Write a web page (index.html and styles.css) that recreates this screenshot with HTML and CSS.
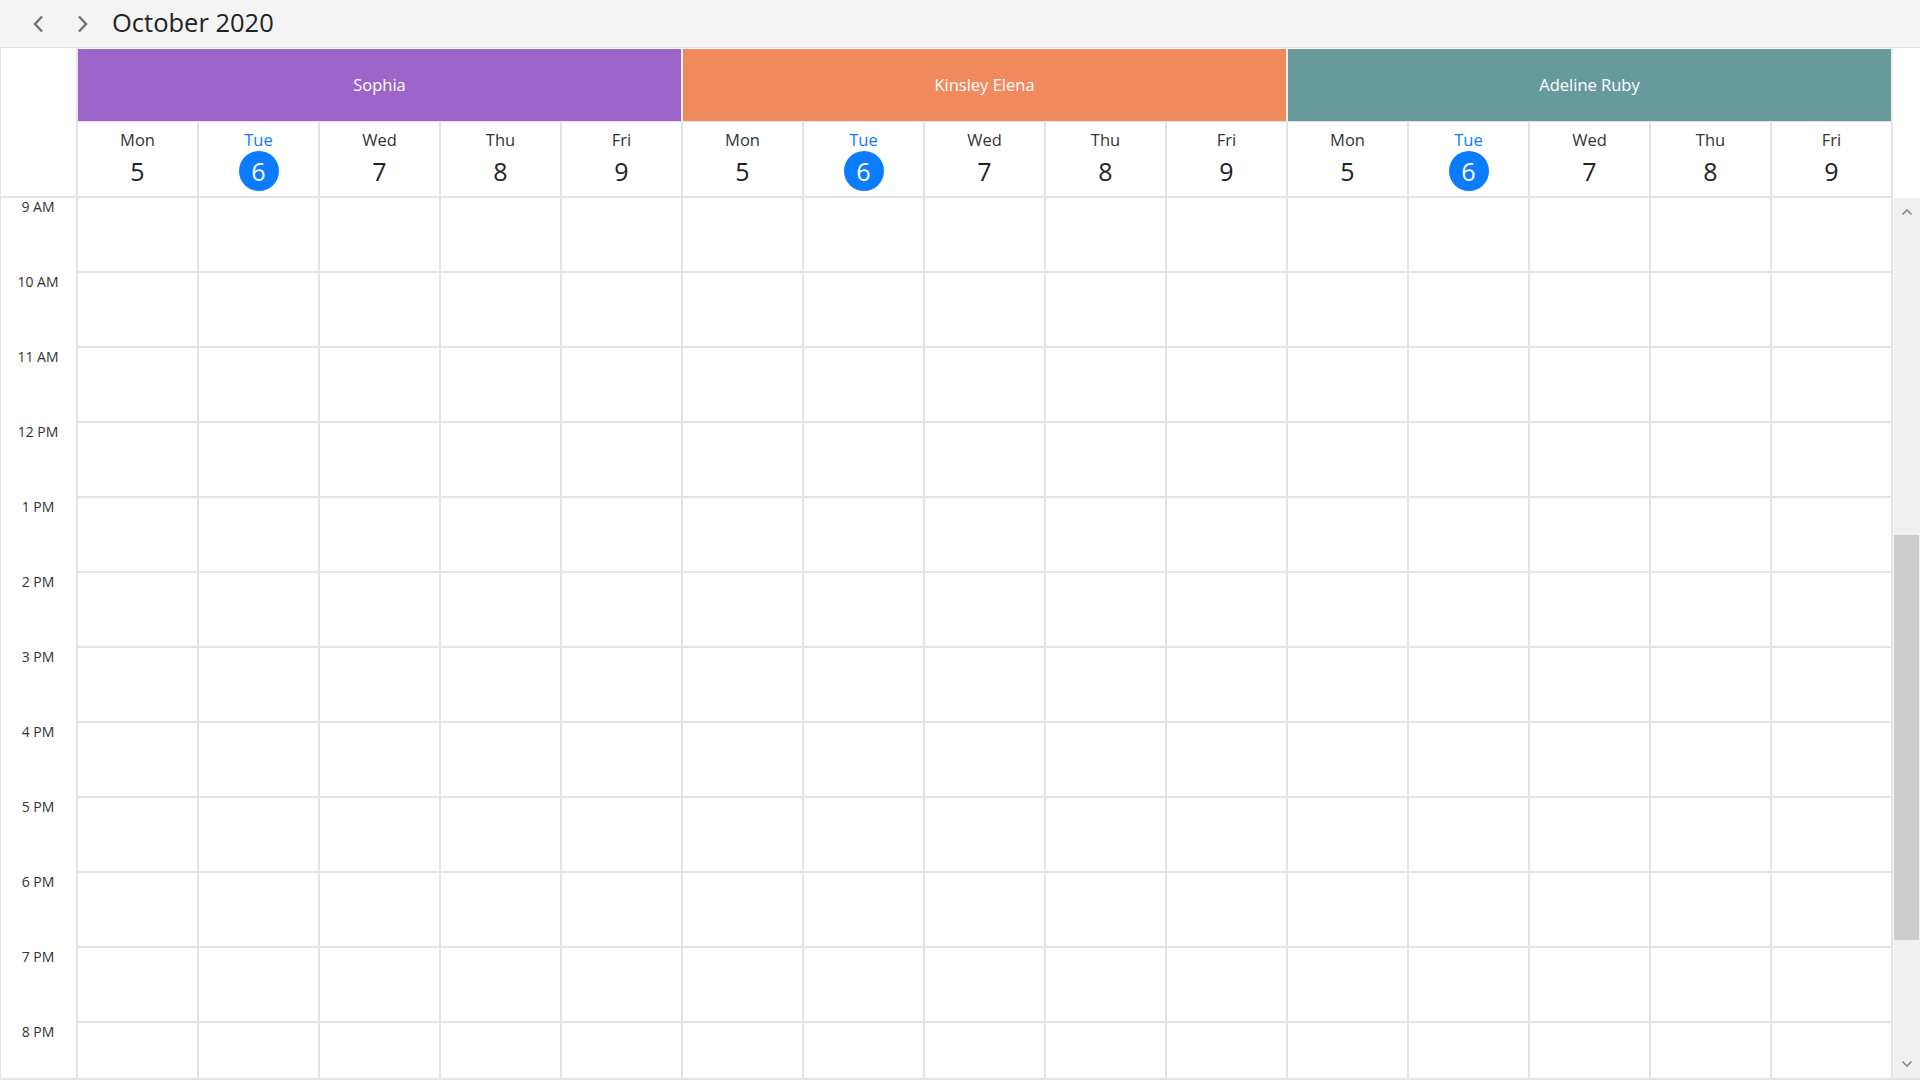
FILE: index.html
```html
<!DOCTYPE html>
<html lang="en">
<head>
<meta charset="utf-8">
<title>Scheduler - October 2020</title>
<link rel="stylesheet" href="styles.css">
</head>
<body>
<div class="toolbar">
  <button class="nav-btn" aria-label="Previous">
    <svg width="12" height="18" viewBox="0 0 12 18"><path d="M10 1.5 L3 9 L10 16.5" fill="none" stroke="#727272" stroke-width="2.4"/></svg>
  </button>
  <button class="nav-btn" aria-label="Next">
    <svg width="12" height="18" viewBox="0 0 12 18"><path d="M2 1.5 L9 9 L2 16.5" fill="none" stroke="#727272" stroke-width="2.4"/></svg>
  </button>
  <div class="title">October 2020</div>
</div>

<div class="scheduler">
  <div class="sched-head">
    <div class="corner"></div>
    <div class="groups">
      <div class="resource r-purple">Sophia</div>
      <div class="resource r-orange">Kinsley Elena</div>
      <div class="resource r-teal">Adeline Ruby</div>

      <div class="day"><span class="dname">Mon</span><span class="dnum">5</span></div>
      <div class="day today"><span class="dname">Tue</span><span class="dnum">6</span></div>
      <div class="day"><span class="dname">Wed</span><span class="dnum">7</span></div>
      <div class="day"><span class="dname">Thu</span><span class="dnum">8</span></div>
      <div class="day"><span class="dname">Fri</span><span class="dnum">9</span></div>

      <div class="day"><span class="dname">Mon</span><span class="dnum">5</span></div>
      <div class="day today"><span class="dname">Tue</span><span class="dnum">6</span></div>
      <div class="day"><span class="dname">Wed</span><span class="dnum">7</span></div>
      <div class="day"><span class="dname">Thu</span><span class="dnum">8</span></div>
      <div class="day"><span class="dname">Fri</span><span class="dnum">9</span></div>

      <div class="day"><span class="dname">Mon</span><span class="dnum">5</span></div>
      <div class="day today"><span class="dname">Tue</span><span class="dnum">6</span></div>
      <div class="day"><span class="dname">Wed</span><span class="dnum">7</span></div>
      <div class="day"><span class="dname">Thu</span><span class="dnum">8</span></div>
      <div class="day"><span class="dname">Fri</span><span class="dnum">9</span></div>
    </div>
    <div class="gutter"></div>
  </div>

  <div class="sched-body">
    <div class="times">
      <div class="time">9 AM</div>
      <div class="time">10 AM</div>
      <div class="time">11 AM</div>
      <div class="time">12 PM</div>
      <div class="time">1 PM</div>
      <div class="time">2 PM</div>
      <div class="time">3 PM</div>
      <div class="time">4 PM</div>
      <div class="time">5 PM</div>
      <div class="time">6 PM</div>
      <div class="time">7 PM</div>
      <div class="time">8 PM</div>
    </div>
    <div class="cells">
      <div class="row"><div class="c"></div><div class="c"></div><div class="c"></div><div class="c"></div><div class="c"></div><div class="c"></div><div class="c"></div><div class="c"></div><div class="c"></div><div class="c"></div><div class="c"></div><div class="c"></div><div class="c"></div><div class="c"></div><div class="c"></div></div>
      <div class="row"><div class="c"></div><div class="c"></div><div class="c"></div><div class="c"></div><div class="c"></div><div class="c"></div><div class="c"></div><div class="c"></div><div class="c"></div><div class="c"></div><div class="c"></div><div class="c"></div><div class="c"></div><div class="c"></div><div class="c"></div></div>
      <div class="row"><div class="c"></div><div class="c"></div><div class="c"></div><div class="c"></div><div class="c"></div><div class="c"></div><div class="c"></div><div class="c"></div><div class="c"></div><div class="c"></div><div class="c"></div><div class="c"></div><div class="c"></div><div class="c"></div><div class="c"></div></div>
      <div class="row"><div class="c"></div><div class="c"></div><div class="c"></div><div class="c"></div><div class="c"></div><div class="c"></div><div class="c"></div><div class="c"></div><div class="c"></div><div class="c"></div><div class="c"></div><div class="c"></div><div class="c"></div><div class="c"></div><div class="c"></div></div>
      <div class="row"><div class="c"></div><div class="c"></div><div class="c"></div><div class="c"></div><div class="c"></div><div class="c"></div><div class="c"></div><div class="c"></div><div class="c"></div><div class="c"></div><div class="c"></div><div class="c"></div><div class="c"></div><div class="c"></div><div class="c"></div></div>
      <div class="row"><div class="c"></div><div class="c"></div><div class="c"></div><div class="c"></div><div class="c"></div><div class="c"></div><div class="c"></div><div class="c"></div><div class="c"></div><div class="c"></div><div class="c"></div><div class="c"></div><div class="c"></div><div class="c"></div><div class="c"></div></div>
      <div class="row"><div class="c"></div><div class="c"></div><div class="c"></div><div class="c"></div><div class="c"></div><div class="c"></div><div class="c"></div><div class="c"></div><div class="c"></div><div class="c"></div><div class="c"></div><div class="c"></div><div class="c"></div><div class="c"></div><div class="c"></div></div>
      <div class="row"><div class="c"></div><div class="c"></div><div class="c"></div><div class="c"></div><div class="c"></div><div class="c"></div><div class="c"></div><div class="c"></div><div class="c"></div><div class="c"></div><div class="c"></div><div class="c"></div><div class="c"></div><div class="c"></div><div class="c"></div></div>
      <div class="row"><div class="c"></div><div class="c"></div><div class="c"></div><div class="c"></div><div class="c"></div><div class="c"></div><div class="c"></div><div class="c"></div><div class="c"></div><div class="c"></div><div class="c"></div><div class="c"></div><div class="c"></div><div class="c"></div><div class="c"></div></div>
      <div class="row"><div class="c"></div><div class="c"></div><div class="c"></div><div class="c"></div><div class="c"></div><div class="c"></div><div class="c"></div><div class="c"></div><div class="c"></div><div class="c"></div><div class="c"></div><div class="c"></div><div class="c"></div><div class="c"></div><div class="c"></div></div>
      <div class="row"><div class="c"></div><div class="c"></div><div class="c"></div><div class="c"></div><div class="c"></div><div class="c"></div><div class="c"></div><div class="c"></div><div class="c"></div><div class="c"></div><div class="c"></div><div class="c"></div><div class="c"></div><div class="c"></div><div class="c"></div></div>
      <div class="row"><div class="c"></div><div class="c"></div><div class="c"></div><div class="c"></div><div class="c"></div><div class="c"></div><div class="c"></div><div class="c"></div><div class="c"></div><div class="c"></div><div class="c"></div><div class="c"></div><div class="c"></div><div class="c"></div><div class="c"></div></div>
    </div>
    <div class="scrollbar">
      <div class="sb-btn">
        <svg width="12" height="8" viewBox="0 0 12 8"><path d="M1.5 6.5 L6 2 L10.5 6.5" fill="none" stroke="#8a8a8a" stroke-width="1.6"/></svg>
      </div>
      <div class="sb-space-top"></div>
      <div class="sb-thumb"></div>
      <div class="sb-space-bottom"></div>
      <div class="sb-btn">
        <svg width="12" height="8" viewBox="0 0 12 8"><path d="M1.5 1.5 L6 6 L10.5 1.5" fill="none" stroke="#8a8a8a" stroke-width="1.6"/></svg>
      </div>
    </div>
  </div>
</div>
</body>
</html>
```

FILE: styles.css
```css
* { box-sizing: border-box; }

html, body {
  margin: 0;
  padding: 0;
  width: 1920px;
  height: 1080px;
  overflow: hidden;
  background: #ffffff;
  font-family: "Open Sans", "Noto Sans", "Liberation Sans", sans-serif;
  color: #333333;
}

/* ---------- toolbar ---------- */
.toolbar {
  height: 48px;
  background: #f4f4f4;
  border-bottom: 1px solid #e2e2e2;
  display: flex;
  align-items: center;
  padding-left: 23px;
  gap: 15px;
}

.nav-btn {
  width: 30px;
  height: 30px;
  padding: 0;
  margin: 0;
  border: 0;
  background: transparent;
  display: flex;
  align-items: center;
  justify-content: center;
}

.title {
  margin-left: -1px;
  font-size: 25.5px;
  line-height: 30px;
  color: #222222;
  padding-bottom: 3px;
}

/* ---------- scheduler ---------- */
.scheduler {
  border-left: 1px solid #e2e2e2;
  height: 1032px;
  display: flex;
  flex-direction: column;
}

.sched-head {
  display: flex;
  height: 150px;
  flex: 0 0 150px;
}

.corner {
  width: 77px;
  flex: 0 0 77px;
  border-right: 2px solid #e4e4e4;
  border-bottom: 2px solid #e4e4e4;
}

.groups {
  flex: 1;
  display: grid;
  grid-template-columns: repeat(15, 1fr);
  grid-template-rows: 74px 76px;
}

.resource {
  grid-column: span 5;
  margin-top: 1px;
  border-right: 2px solid #ececec;
  border-bottom: 1px solid #e2e2e2;
  color: #ffffff;
  font-size: 16.5px;
  display: flex;
  align-items: center;
  justify-content: center;
  padding-bottom: 2px;
}

.r-purple { background: #9d65c9; }
.r-orange { background: #f08a5d; }
.r-teal   { background: #679b9b; }

.day {
  border-right: 2px solid #e4e4e4;
  border-bottom: 2px solid #e4e4e4;
  display: flex;
  flex-direction: column;
  align-items: center;
  padding-top: 7px;
}

.dname {
  font-size: 16.5px;
  line-height: 22px;
  color: #333333;
}

.dnum {
  margin-top: 0;
  width: 40px;
  height: 40px;
  border-radius: 50%;
  font-size: 25px;
  line-height: 40px;
  text-align: center;
  color: #222222;
}

.today .dname { color: #0b7bff; }
.today .dnum {
  background: #0b7bff;
  color: #ffffff;
}

.gutter {
  width: 27px;
  flex: 0 0 27px;
}

/* ---------- body ---------- */
.sched-body {
  flex: 1;
  display: flex;
  overflow: hidden;
  border-bottom: 2px solid #e4e4e4;
}

.times {
  width: 77px;
  flex: 0 0 77px;
  border-right: 2px solid #e4e4e4;
  display: flex;
  flex-direction: column;
}

.time {
  flex: 0 0 75px;
  height: 75px;
  font-size: 14px;
  line-height: 18px;
  text-align: center;
  color: #333333;
  padding-right: 1px;
}

.cells {
  flex: 1;
  display: flex;
  flex-direction: column;
}

.row {
  flex: 0 0 75px;
  height: 75px;
  display: grid;
  grid-template-columns: repeat(15, 1fr);
  border-bottom: 2px solid #e4e4e4;
}

.c {
  border-right: 2px solid #e4e4e4;
}

/* ---------- scrollbar ---------- */
.scrollbar {
  width: 27px;
  flex: 0 0 27px;
  background: #f0f0f0;
  border-left: 1px solid #f6f6f6;
  display: flex;
  flex-direction: column;
  padding-right: 1px;
}

.sb-btn {
  flex: 0 0 28px;
  height: 28px;
  display: flex;
  align-items: center;
  justify-content: center;
  background: #f0f0f0;
}

.sb-space-top { flex: 0 0 309px; }
.sb-thumb {
  flex: 0 0 405px;
  background: #cdcdcd;
}
.sb-space-bottom { flex: 1; }
```
